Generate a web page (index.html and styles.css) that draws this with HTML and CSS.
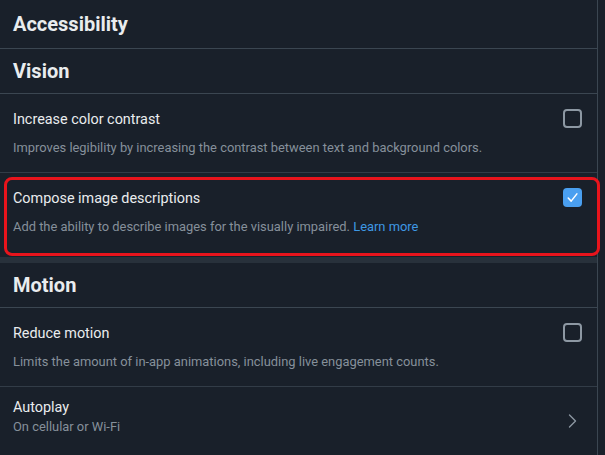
FILE: index.html
```html
<!DOCTYPE html>
<html lang="en">
<head>
<meta charset="utf-8">
<title>Accessibility</title>
<link rel="stylesheet" href="styles.css">
</head>
<body>
<div class="panel">
  <div class="page-title">Accessibility</div>
  <div class="section-head">Vision</div>
  <div class="row">
    <div class="row-text">
      <div class="row-title">Increase color contrast</div>
      <div class="row-desc">Improves legibility by increasing the contrast between text and background colors.</div>
    </div>
    <span class="checkbox"></span>
  </div>
  <div class="row row-highlight">
    <div class="row-text">
      <div class="row-title">Compose image descriptions</div>
      <div class="row-desc">Add the ability to describe images for the visually impaired. <span class="link">Learn more</span></div>
    </div>
    <span class="checkbox checked">
      <svg viewBox="0 0 20 20" width="20" height="20"><path d="M5.5 10.5 L8.6 13.8 L14.6 6.2" fill="none" stroke="#fff" stroke-width="1.6" stroke-linecap="round" stroke-linejoin="round"/></svg>
    </span>
    <div class="highlight-box"></div>
  </div>
  <div class="section-sep"></div>
  <div class="section-head">Motion</div>
  <div class="row">
    <div class="row-text">
      <div class="row-title">Reduce motion</div>
      <div class="row-desc">Limits the amount of in-app animations, including live engagement counts.</div>
    </div>
    <span class="checkbox"></span>
  </div>
  <div class="row row-link">
    <div class="row-text">
      <div class="row-title">Autoplay</div>
      <div class="row-sub">On cellular or Wi-Fi</div>
    </div>
    <svg class="chevron" viewBox="0 0 10 14" width="10" height="14"><path d="M1.5 1 L7.5 7 L1.5 13" fill="none" stroke="#8b96a1" stroke-width="1.4" stroke-linecap="round" stroke-linejoin="round"/></svg>
  </div>
</div>
</body>
</html>
```
FILE: styles.css
```css
html, body {
  margin: 0;
  padding: 0;
  background: #19202a;
  height: 455px;
  overflow: hidden;
}
body {
  font-family: Roboto, "Noto Sans", sans-serif;
  color: #e9ecee;
}
.panel {
  width: 597px;
  height: 455px;
  border-right: 1px solid #3b4651;
  box-sizing: content-box;
}
.page-title,
.section-head {
  display: flex;
  align-items: center;
  padding-left: 13px;
  font-size: 20px;
  font-weight: 700;
  border-bottom: 1px solid #3b4651;
}
.page-title {
  height: 47px;
  padding-bottom: 1px;
}
.section-head {
  height: 44px;
}
.row {
  position: relative;
  display: flex;
  align-items: flex-start;
  justify-content: space-between;
  padding: 16px 15px 16px 13px;
  border-bottom: 1px solid #323c47;
}
.row-title {
  font-size: 14.4px;
  line-height: 20px;
}
.row-desc {
  margin-top: 10px;
  font-size: 12.9px;
  line-height: 16px;
  color: #86909b;
}
.row-sub {
  margin-top: 1px;
  font-size: 12.9px;
  line-height: 16px;
  color: #86909b;
}
.link {
  color: #3e98e4;
}
.checkbox {
  flex: none;
  width: 19px;
  height: 19px;
  margin-top: -1px;
  box-sizing: border-box;
  border: 2px solid #8d98a3;
  border-radius: 4px;
}
.checkbox.checked {
  border: none;
  background: #4a9ff0;
  display: flex;
  align-items: center;
  justify-content: center;
}
.checkbox.checked svg {
  width: 19px;
  height: 19px;
}
.row-highlight {
  height: 52px;
  border-bottom: none;
}
.highlight-box {
  position: absolute;
  top: 4px;
  left: 4px;
  right: -3px;
  bottom: 1px;
  border: 3px solid #e8141c;
  border-radius: 8px;
  pointer-events: none;
}
.section-sep {
  height: 6px;
  background: #28313b;
}
.row-link {
  align-items: center;
  padding: 11px 19px 17px 13px;
  border-bottom: none;
}
.chevron {
  flex: none;
  margin-top: 9px;
}
```
